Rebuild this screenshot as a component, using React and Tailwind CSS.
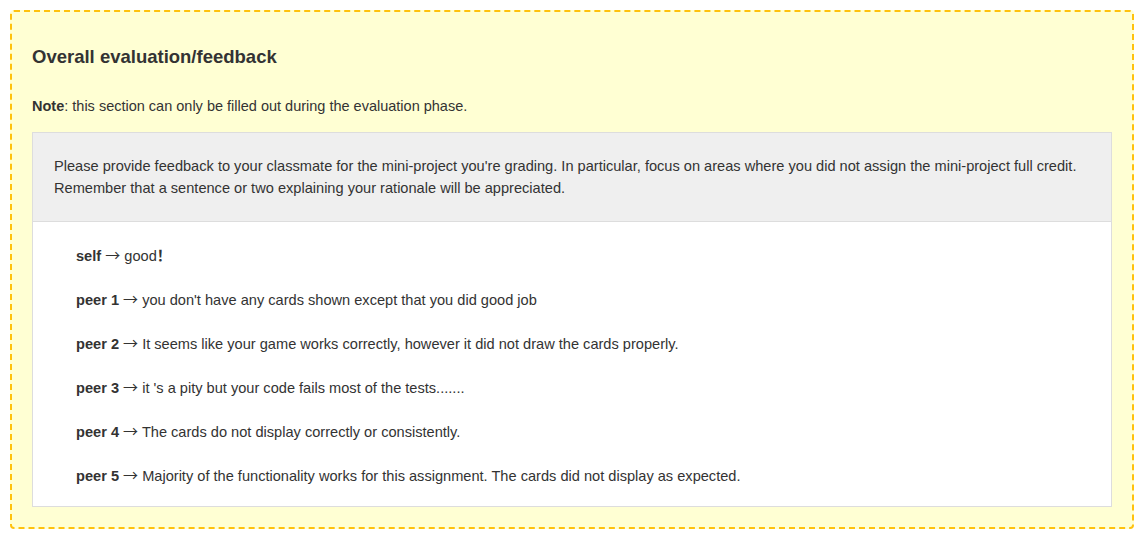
export default function App() {
  const items = [
    ["self", "good", true],
    ["peer 1", "you don't have any cards shown except that you did good job"],
    ["peer 2", "It seems like your game works correctly, however it did not draw the cards properly."],
    ["peer 3", "it 's a pity but your code fails most of the tests......."],
    ["peer 4", "The cards do not display correctly or consistently."],
    ["peer 5", "Majority of the functionality works for this assignment. The cards did not display as expected."],
  ];
  return (
    <div className="bg-white min-h-[537px] pt-[10px] pl-[10px] text-[#333] text-[14.5px]" style={{ fontFamily: '"Liberation Sans", Arial, "Noto Sans CJK SC", sans-serif' }}>
      <div className="w-[1124px] border-2 border-dashed border-[#ffc20e] rounded-[4px] bg-[#ffffd3] px-5 pb-5 pt-[35px]">
        <h3 className="text-[18.5px] font-bold leading-5 text-[#333]">Overall evaluation/feedback</h3>
        <p className="mt-[29px] leading-5"><b>Note</b>: this section can only be filled out during the evaluation phase.</p>
        <div className="mt-[16px] border border-[#dddddd] bg-white">
          <div className="bg-[#efefef] border-b border-[#dddddd] px-[21px] py-[22px] leading-[22px] text-[14.6px]">
            Please provide feedback to your classmate for the mini-project you're grading. In particular, focus on areas where you did not assign the mini-project full credit. Remember that a sentence or two explaining your rationale will be appreciated.
          </div>
          <div className="pl-[43px] pr-5 pt-[22px] pb-[20px] flex flex-col gap-[22px] leading-[22px] text-[14.6px]">
            {items.map(([k, v, bang]) => (
              <div key={k} className="h-[22px]">
                <b>{k}</b> <span className="text-[15px]" style={{ fontFamily: '"Noto Sans CJK SC", sans-serif' }}>→</span> {v}
                {bang && <span className="font-bold" style={{ fontFamily: '"Noto Sans CJK SC", sans-serif' }}>！</span>}
              </div>
            ))}
          </div>
        </div>
      </div>
    </div>
  );
}
